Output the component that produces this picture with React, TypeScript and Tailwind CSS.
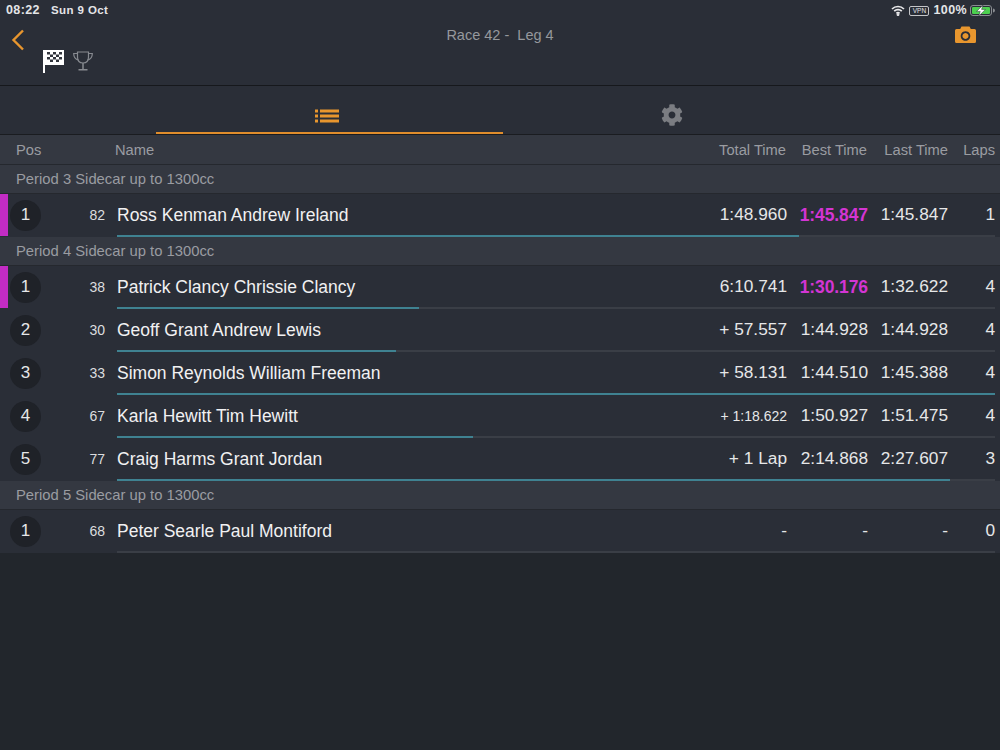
import { FaCog } from "react-icons/fa";

type Driver = { pos: number; num: number; name: string; total: string; best: string; last: string; laps: number; bar: number; fastest?: boolean; smallTotal?: boolean };

const groups: { title: string; drivers: Driver[] }[] = [
  {
    title: "Period 3 Sidecar up to 1300cc",
    drivers: [{ pos: 1, num: 82, name: "Ross Kenman Andrew Ireland", total: "1:48.960", best: "1:45.847", last: "1:45.847", laps: 1, bar: 682, fastest: true }],
  },
  {
    title: "Period 4 Sidecar up to 1300cc",
    drivers: [
      { pos: 1, num: 38, name: "Patrick Clancy Chrissie Clancy", total: "6:10.741", best: "1:30.176", last: "1:32.622", laps: 4, bar: 302, fastest: true },
      { pos: 2, num: 30, name: "Geoff Grant Andrew Lewis", total: "+ 57.557", best: "1:44.928", last: "1:44.928", laps: 4, bar: 279 },
      { pos: 3, num: 33, name: "Simon Reynolds William Freeman", total: "+ 58.131", best: "1:44.510", last: "1:45.388", laps: 4, bar: 878 },
      { pos: 4, num: 67, name: "Karla Hewitt Tim Hewitt", total: "+ 1:18.622", best: "1:50.927", last: "1:51.475", laps: 4, bar: 356, smallTotal: true },
      { pos: 5, num: 77, name: "Craig Harms Grant Jordan", total: "+ 1 Lap", best: "2:14.868", last: "2:27.607", laps: 3, bar: 833 },
    ],
  },
  {
    title: "Period 5 Sidecar up to 1300cc",
    drivers: [{ pos: 1, num: 68, name: "Peter Searle Paul Montiford", total: "-", best: "-", last: "-", laps: 0, bar: 0 }],
  },
];

function StatusBar() {
  return (
    <div className="flex h-[20px] items-center justify-between pl-[6px] pr-[5px] pt-[1px] font-bold tracking-[0.4px] text-[#e4e5e7]">
      <div className="flex items-baseline gap-[11px]">
        <span className="text-[12.500px]">08:22</span>
        <span className="text-[11.500px]">Sun 9 Oct</span>
      </div>
      <div className="flex items-center">
        <svg width="14" height="11" viewBox="0 0 14 11" fill="none" stroke="#e8e8ea" strokeWidth="1.7">
          <path d="M1 4 A8.500 8.500 0 0 1 13 4" />
          <path d="M3.200 6.200 A5.400 5.400 0 0 1 10.800 6.200" />
          <path d="M5.400 8.400 A2.400 2.400 0 0 1 8.600 8.400" />
          <circle cx="7" cy="9.600" r="0.600" fill="#e8e8ea" />
        </svg>
        <span className="ml-[4px] flex h-[10px] w-[20px] items-center justify-center rounded-[2px] border border-[#c4c5c8] text-[6.500px] font-normal tracking-normal">VPN</span>
        <span className="ml-[4px] text-[12.500px]">100%</span>
        <svg className="ml-[3px]" width="25" height="11" viewBox="0 0 25 11">
          <rect x="0.500" y="0.500" width="21" height="10" rx="2.500" fill="none" stroke="#8a8d92" />
          <rect x="2" y="2" width="18" height="7" rx="1.200" fill="#4cd04f" />
          <path d="M23 3.600 a1.600 1.600 0 0 1 0 3.800z" fill="#8a8d92" />
          <path d="M13 0 L6.500 6.400 H10.200 L8.800 11 L15.500 4.400 H11.600z" fill="#fff" stroke="#2a2e37" strokeWidth="0.500" />
        </svg>
      </div>
    </div>
  );
}

function NavBar() {
  return (
    <div className="flex h-[66px] border-b border-[#16181c]">
      <div className="w-[100px] pl-[11px]">
        <svg className="mt-[9px]" width="14" height="22" viewBox="0 0 14 22" fill="none" stroke="#e8962e" strokeWidth="2.400">
          <path d="M12 1.500 L2.500 11 L12 20.500" />
        </svg>
        <div className="mt-[-2px] flex items-center gap-[9px] pl-[32px]">
          <svg width="21" height="24" viewBox="0 0 21 24">
            <rect x="0" y="1" width="2" height="23" fill="#fff" />
            <path d="M2 1 H21 V16 H2z" fill="#fff" />
            <path
              d="M4 3h3v2.500H4zM10 3h3v2.500h-3zM16 3h3v2.500h-3zM7 5.500h3V8H7zM13 5.500h3V8h-3zM4 8h3v2.500H4zM10 8h3v2.500h-3zM16 8h3v2.500h-3zM7 10.500h3V13H7zM13 10.500h3V13h-3z"
              fill="#33363e"
            />
          </svg>
          <svg width="20" height="20" viewBox="0 0 20 20" fill="none" stroke="#878a90" strokeWidth="1.200">
            <path d="M4.500 1 H15.500 V6 C15.500 10 13 12 10 12 C7 12 4.500 10 4.500 6z" />
            <path d="M4.500 2.500 H0.700 C0.700 6.500 3 8.500 5.500 9" />
            <path d="M15.500 2.500 H19.300 C19.300 6.500 17 8.500 14.500 9" />
            <path d="M10 12 V18 M5.500 18.800 H14.500" strokeWidth="1.500" />
          </svg>
        </div>
      </div>
      <div className="flex-1 pt-[5px] text-center text-[14.500px] text-[#95989d]">Race 42 -&nbsp; Leg 4</div>
      <div className="flex w-[100px] justify-end pr-[24px] pt-[6px]">
        <svg width="21" height="17" viewBox="0 0 21 17">
          <path
            fillRule="evenodd"
            d="M6.500 0.500 H14.500 L15.800 3 H19.500 Q21 3 21 4.500 V15.500 Q21 17 19.500 17 H1.500 Q0 17 0 15.500 V4.500 Q0 3 1.500 3 H5.200z M10.500 5.200 a4.800 4.800 0 1 0 0.010 0z M10.500 7 a3 3 0 1 1 -0.010 0z"
            fill="#e8962e"
          />
        </svg>
      </div>
    </div>
  );
}

function Tabs() {
  return (
    <div className="flex h-[49px] border-b border-[#1a1c20] pl-[156px]">
      <div className="flex h-[48px] w-[347px] items-center justify-center border-b-2 border-[#e08d2c] pr-[6px] pt-[14px]">
        <svg width="24" height="14" viewBox="0 0 24 14" fill="#e8962e">
          <rect x="0" y="0.500" width="3" height="3" />
          <rect x="0" y="5.500" width="3" height="3" />
          <rect x="0" y="10.500" width="3" height="3" />
          <rect x="5" y="0.500" width="19" height="3" />
          <rect x="5" y="5.500" width="19" height="3" />
          <rect x="5" y="10.500" width="19" height="3" />
        </svg>
      </div>
      <div className="flex h-[46px] w-[338px] items-center justify-center pt-[12px]">
        <FaCog className="text-[22px] text-[#7b7d82]" />
      </div>
    </div>
  );
}

function Row({ d }: { d: Driver }) {
  return (
    <div className="flex h-[43px] bg-[#2a2e37]">
      <div className={d.fastest ? "mb-[1px] w-[8px] bg-[#c32cc4]" : "w-[8px]"} />
      <div className="flex min-w-0 flex-1 flex-col">
        <div className="flex flex-1 items-center pr-[5px] pt-[1px]">
          <div className="ml-[2px] flex h-[31px] w-[31px] items-center justify-center rounded-full bg-[#1f2228] text-[17px] text-[#e6e7e8]">{d.pos}</div>
          <div className="w-[64px] text-right text-[14px] text-[#dcdddf]">{d.num}</div>
          <div className="ml-[12px] flex-1 text-[17.500px] text-[#f1f1f2]">{d.name}</div>
          <div className={d.smallTotal ? "text-[14px] text-[#e6e7e8]" : "text-[17.300px] text-[#e6e7e8]"}>{d.total}</div>
          <div className={d.fastest ? "w-[81px] text-right text-[17.500px] font-bold tracking-[-0.100px] text-[#d335d3]" : "w-[81px] text-right text-[17.300px] text-[#e6e7e8]"}>{d.best}</div>
          <div className="w-[80px] text-right text-[17.300px] text-[#e6e7e8]">{d.last}</div>
          <div className="w-[47px] text-right text-[17.300px] text-[#e6e7e8]">{d.laps}</div>
        </div>
        <div className="ml-[109px] mr-[5px] h-[2px] bg-[#3a3e46]">
          <div className="h-[2px] bg-[#3f8291]" style={{ width: d.bar }} />
        </div>
      </div>
    </div>
  );
}

export default function App() {
  return (
    <div className="h-[750px] w-[1000px] overflow-hidden bg-[#22262c] font-['Liberation_Sans',Arial,sans-serif]">
      <div className="bg-[#2a2e37]">
        <StatusBar />
        <NavBar />
        <Tabs />
      </div>
      <div className="flex h-[30px] items-center border-b border-[#25282e] bg-[#343841] pr-[5px] pt-[1px] text-[14.700px] text-[#9a9ca1]">
        <div className="w-[115px] pl-[16px]">Pos</div>
        <div className="flex-1">Name</div>
        <div>Total Time</div>
        <div className="w-[81px] text-right">Best Time</div>
        <div className="w-[81px] text-right">Last Time</div>
        <div className="w-[47px] text-right">Laps</div>
      </div>
      {groups.map((g) => (
        <div key={g.title}>
          <div className="flex h-[29px] items-center border-b border-[#25282e] bg-[#343841] pl-[16px] pt-[1px] text-[14.800px] text-[#9a9ca1]">{g.title}</div>
          {g.drivers.map((d) => (
            <Row key={d.num} d={d} />
          ))}
        </div>
      ))}
    </div>
  );
}
